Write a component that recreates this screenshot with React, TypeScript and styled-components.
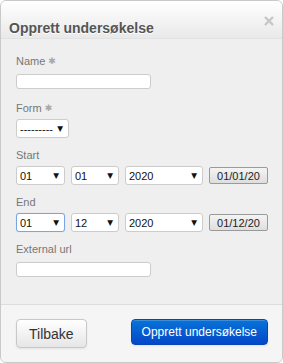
import React from 'react';
import styled, { createGlobalStyle } from 'styled-components'

const GlobalStyle = createGlobalStyle`
  html, body {
    margin: 0;
    padding: 0;
    background: #ffffff;
  }
  body {
    font-family: "Liberation Sans", Arial, sans-serif;
  }
`

const Modal = styled.div`
  width: 283px;
  height: 363px;
  box-sizing: border-box;
  display: flex;
  flex-direction: column;
  border: 1px solid #c9c9c9;
  border-radius: 6px;
  overflow: hidden;
  background: #efefef;
`

const Header = styled.header`
  height: 38px;
  box-sizing: border-box;
  display: flex;
  justify-content: space-between;
  align-items: flex-start;
  padding: 19px 8px 0 8px;
  background: linear-gradient(to bottom, #ffffff, #e9e9e9);
  border-bottom: 1px solid #e2e2e2;
`

const Title = styled.h3`
  margin: 0;
  font-size: 14px;
  line-height: 16px;
  font-weight: 700;
  color: #555555;
  text-shadow: 0 1px 0 #ffffff;
`

const Close = styled.button`
  border: 0;
  padding: 0;
  margin-top: -4px;
  background: none;
  width: 10px;
  height: 10px;
  display: flex;
  cursor: pointer;
`

const Body = styled.div`
  flex: 1;
  padding: 16px 15px 0 15px;
  background: #efefef;
`

const Field = styled.div`
  display: flex;
  flex-direction: column;
  align-items: flex-start;
  margin-bottom: 11px;
`

const Label = styled.label`
  font-size: 11px;
  line-height: 13px;
  color: #777777;
  margin-bottom: 4px;
  display: flex;
  align-items: center;
`

const Required = styled.span`
  font-family: "DejaVu Sans", sans-serif;
  font-size: 9px;
  line-height: 9px;
  color: #a8a8a8;
  margin-left: 3px;
`

const TextInput = styled.input`
  width: 135px;
  height: 15px;
  box-sizing: border-box;
  margin: 2px 0;
  padding: 0 4px;
  border: 1px solid #cccccc;
  border-radius: 3px;
  background: #ffffff;
  font-size: 11px;
  font-family: inherit;
`

const Row = styled.div`
  display: flex;
  align-items: center;
  gap: 6px;
`

const SelectWrap = styled.div<{ $width: number; $focused?: boolean }>`
  display: grid;
  align-items: center;
  width: ${p => p.$width}px;
  height: 19px;
  box-sizing: border-box;
  border: 1px solid ${p => (p.$focused ? '#79a6e3' : '#cccccc')};
  box-shadow: ${p => (p.$focused ? '0 0 1px #a9c8f0' : 'none')};
  border-radius: 3px;
  background: #ffffff;
  & > * {
    grid-area: 1 / 1;
  }
`

const NativeSelect = styled.select`
  appearance: none;
  border: 0;
  outline: none;
  background: transparent;
  font-family: "Liberation Sans", Arial, sans-serif;
  font-size: 11px;
  color: #111111;
  padding: 0 0 0 3px;
  height: 17px;
  width: 100%;
`

const Arrow = styled.span`
  justify-self: end;
  margin-right: 5px;
  font-family: "DejaVu Sans", sans-serif;
  font-size: 7.5px;
  line-height: 8px;
  color: #111111;
  pointer-events: none;
`

const DateButton = styled.button`
  width: 59px;
  height: 17px;
  box-sizing: border-box;
  padding: 0;
  border: 1px solid #9a9a9a;
  border-radius: 2px;
  background: linear-gradient(to bottom, #f4f4f4, #dedede);
  font-family: "Liberation Sans", Arial, sans-serif;
  font-size: 11px;
  color: #222222;
`

const Footer = styled.footer`
  height: 58px;
  box-sizing: border-box;
  display: flex;
  justify-content: space-between;
  align-items: flex-start;
  padding: 14px 14px 0 15px;
  border-top: 1px solid #dddddd;
  background: #f5f5f5;
`

const Button = styled.button<{ $primary?: boolean }>`
  box-sizing: border-box;
  height: ${p => (p.$primary ? 26 : 29)}px;
  padding: 0 ${p => (p.$primary ? 10 : 12)}px;
  border-radius: 4px;
  font-family: "Liberation Sans", Arial, sans-serif;
  font-size: ${p => (p.$primary ? 12 : 14)}px;
  color: ${p => (p.$primary ? '#ffffff' : '#333333')};
  border: 1px solid ${p => (p.$primary ? '#0746b8' : '#c8c8c8')};
  background: ${p =>
    p.$primary
      ? 'linear-gradient(to bottom, #0873d8, #0447c8)'
      : 'linear-gradient(to bottom, #ffffff, #e6e6e6)'};
  box-shadow: inset 0 1px 0 rgba(255, 255, 255, 0.2), 0 1px 2px rgba(0, 0, 0, 0.08);
  cursor: pointer;
`

const Select = ({ width, value, options, focused }: { width: number; value: string; options: string[]; focused?: boolean }) => (
  <SelectWrap $width={width} $focused={focused}>
    <NativeSelect defaultValue={value}>
      {options.map(o => (
        <option key={o} value={o}>{o}</option>
      ))}
    </NativeSelect>
    <Arrow>▼</Arrow>
  </SelectWrap>
)

const days = Array.from({ length: 31 }, (_, i) => String(i + 1).padStart(2, '0'))
const months = Array.from({ length: 12 }, (_, i) => String(i + 1).padStart(2, '0'))
const years = ['2018', '2019', '2020', '2021', '2022']

const DateRow = ({ day, month, year, label, focused }: { day: string; month: string; year: string; label: string; focused?: boolean }) => (
  <Row>
    <Select width={49} value={day} options={days} focused={focused} />
    <Select width={48} value={month} options={months} />
    <Select width={78} value={year} options={years} />
    <DateButton>{label}</DateButton>
  </Row>
)

export default function App() {
  return (
    <>
      <GlobalStyle />
      <Modal>
        <Header>
          <Title>Opprett undersøkelse</Title>
          <Close aria-label="Lukk">
            <svg width="10" height="10" viewBox="0 0 10 10">
              <path d="M1 1 L9 9 M9 1 L1 9" stroke="#c6c6c6" strokeWidth="2.4" />
            </svg>
          </Close>
        </Header>
        <Body>
          <Field>
            <Label>Name<Required>✱</Required></Label>
            <TextInput />
          </Field>
          <Field>
            <Label>Form<Required>✱</Required></Label>
            <Select width={53} value="---------" options={['---------']} />
          </Field>
          <Field>
            <Label>Start</Label>
            <DateRow day="01" month="01" year="2020" label="01/01/20" />
          </Field>
          <Field>
            <Label>End</Label>
            <DateRow day="01" month="12" year="2020" label="01/12/20" focused />
          </Field>
          <Field>
            <Label>External url</Label>
            <TextInput />
          </Field>
        </Body>
        <Footer>
          <Button>Tilbake</Button>
          <Button $primary>Opprett undersøkelse</Button>
        </Footer>
      </Modal>
    </>
  )
}
